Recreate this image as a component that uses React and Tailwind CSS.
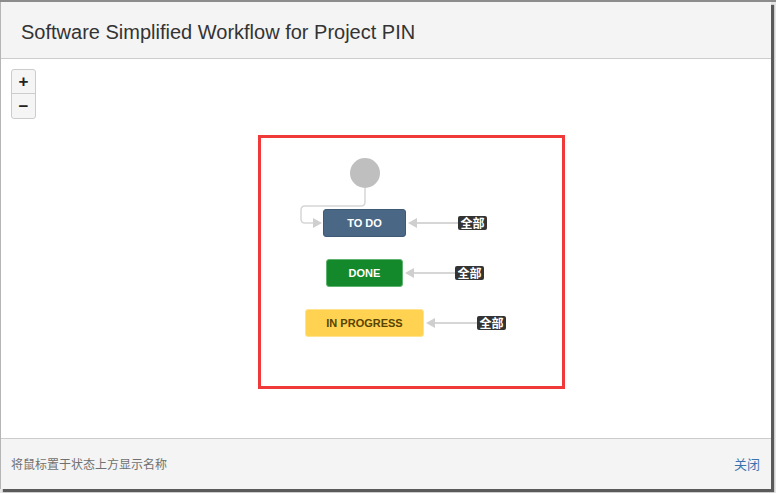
import React from 'react';

const statuses = [
  { name: 'TO DO', box: 'left-[62px] top-[71px] w-[83px] bg-[#4a6785] text-white border-[#3e5a77]', badge: 'left-[197px] top-[78px]' },
  { name: 'DONE', box: 'left-[65px] top-[121px] w-[77px] bg-[#14892c] text-white border-[#5fb36f]', badge: 'left-[194px] top-[128px]' },
  { name: 'IN PROGRESS', box: 'left-[44px] top-[171px] w-[119px] bg-[#ffd351] text-[#594300] border-[#ffe38f]', badge: 'left-[216px] top-[178px]' },
];

const transitions = [
  { y: 85, tip: 147, from: 197 },
  { y: 135, tip: 144, from: 194 },
  { y: 185, tip: 165, from: 216 },
];

const Diagram = () => (
  <div className="relative ml-[257px] mt-[76px] h-[254px] w-[307px] border-[3px] border-[#f03a3a]">
    <svg className="absolute left-0 top-0" width="301" height="248">
      <circle cx="104" cy="35" r="15" fill="#bfbfbf" />
      <path
        d="M104 50 V64 Q104 68 100 68 H44 Q40 68 40 72 V81 Q40 85 44 85 H52"
        fill="none"
        stroke="#d6d6d6"
        strokeWidth="1.5"
      />
      <polygon points="52,80 61,85 52,90" fill="#cfcfcf" />
      {transitions.map((t) => (
        <g key={t.y}>
          <line x1={t.tip + 8} y1={t.y} x2={t.from} y2={t.y} stroke="#c8c8c8" strokeWidth="1.5" />
          <polygon points={`${t.tip},${t.y} ${t.tip + 9},${t.y - 5} ${t.tip + 9},${t.y + 5}`} fill="#cfcfcf" />
        </g>
      ))}
    </svg>
    {statuses.map((s) => (
      <React.Fragment key={s.name}>
        <div
          className={`absolute flex h-[28px] items-center justify-center rounded-[3px] border text-[11px] font-bold ${s.box}`}
          style={{ fontFamily: '"Liberation Sans", Arial, sans-serif' }}
        >
          {s.name}
        </div>
        <div
          className={`absolute flex h-[14px] w-[29px] items-center justify-center rounded-[2px] bg-[#333333] text-[12px] font-bold leading-none text-white ${s.badge}`}
          style={{ fontFamily: '"Noto Sans CJK SC", sans-serif' }}
        >
          全部
        </div>
      </React.Fragment>
    ))}
  </div>
);

export default function App() {
  return (
    <div
      className="h-[493px] w-[776px] overflow-hidden bg-[#e6e6e6]"
      style={{ fontFamily: '"Liberation Sans", Arial, "Noto Sans CJK SC", sans-serif' }}
    >
      <div className="h-[2px] w-full bg-[#8c8c8c]" />
      <div className="flex h-[487px] w-[771px] flex-col border-l border-[#b5b5b5] bg-white shadow-[3px_3px_1px_#5a5a5a]">
        <div className="flex h-[57px] shrink-0 items-center border-b border-[#cccccc] bg-[#f4f4f4] pl-[20px] pt-[3px]">
          <h2 className="text-[20px] text-[#333333]">Software Simplified Workflow for Project PIN</h2>
        </div>
        <div className="relative flex-1">
          <div className="absolute left-[10px] top-[10px] flex w-[25px] flex-col overflow-hidden rounded-[3px] border border-[#cccccc] bg-[#f5f5f5] text-[#222]">
            <button className="flex h-[24px] items-center justify-center border-b border-[#cccccc] text-[17px] font-bold leading-none">+</button>
            <button className="flex h-[24px] items-center justify-center text-[17px] font-bold leading-none">−</button>
          </div>
          <Diagram />
        </div>
        <div className="flex h-[51px] shrink-0 items-center justify-between border-t border-[#cccccc] bg-[#f4f4f4] pl-[10px] pr-[11px]">
          <span className="text-[12px] text-[#707070]" style={{ fontFamily: '"Noto Sans CJK SC", sans-serif' }}>
            将鼠标置于状态上方显示名称
          </span>
          <a className="text-[13px] text-[#3b73af]" style={{ fontFamily: '"Noto Sans CJK SC", sans-serif' }}>
            关闭
          </a>
        </div>
      </div>
    </div>
  );
}
